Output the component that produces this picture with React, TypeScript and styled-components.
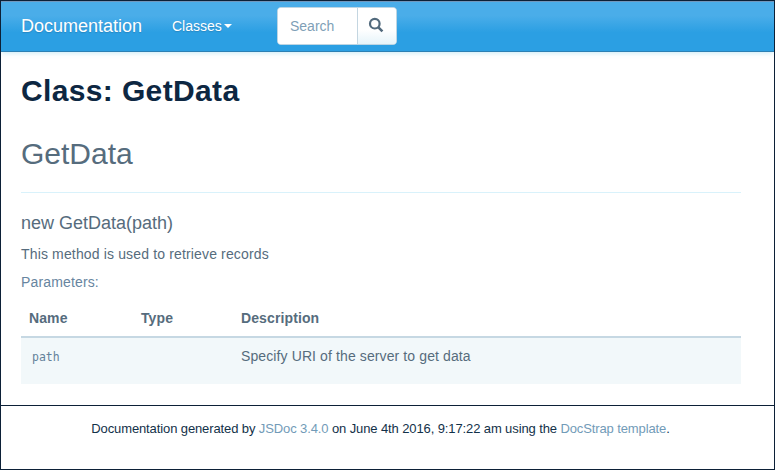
import React from "react";
import styled, { createGlobalStyle } from "styled-components";

const GlobalStyle = createGlobalStyle`
  * { box-sizing: border-box; }
  html, body { margin: 0; padding: 0; }
  body {
    font-family: "Liberation Sans", Arial, sans-serif;
    font-size: 14px;
    line-height: 20px;
    color: #566c7d;
    background: #fff;
  }
`;

const Page = styled.div`
  display: flex;
  flex-direction: column;
  width: 775px;
  height: 470px;
  border: 1px solid #0c2037;
  overflow: hidden;
`;

const Navbar = styled.nav`
  display: flex;
  flex: none;
  align-items: center;
  height: 51px;
  padding: 0 20px 2px;
  background: linear-gradient(#4aade9 0, #4aade9 28%, #2b9fe3 62%, #2b9fe3 100%);
  border-top: 1px solid #7197bd;
  border-bottom: 1px solid #2c80b4;
  box-shadow: 0 1px 5px rgba(80, 190, 225, 0.3);
  color: #fff;
  text-shadow: 0 1px 1px rgba(30, 80, 120, 0.3);
`;

const Brand = styled.a`
  width: 151px;
  font-size: 18px;
`;

const NavItem = styled.a`
  display: flex;
  align-items: center;
  width: 105px;
`;

const Caret = styled.span`
  margin-left: 2px;
  border-top: 4px solid #fff;
  border-left: 4px solid transparent;
  border-right: 4px solid transparent;
`;

const SearchGroup = styled.div`
  display: flex;
  width: 120px;
  height: 38px;
  border: 1px solid #bdd5e3;
  border-radius: 4px;
  overflow: hidden;
  background: #fff;
`;

const SearchInput = styled.input`
  width: 79px;
  padding: 0 0 0 12px;
  border: 0;
  outline: 0;
  font: inherit;
  color: #566c7d;
  background: #fff;
  &::placeholder { color: #7f9fb7; opacity: 1; }
`;

const SearchButton = styled.button`
  display: flex;
  flex: 1;
  align-items: center;
  justify-content: center;
  padding: 0 2px 2px 0;
  border: 0;
  border-left: 1px solid #c4d6e1;
  background: linear-gradient(#fff 60%, #e6f4fa);
`;

const Content = styled.main`
  display: flex;
  flex: none;
  flex-direction: column;
  height: 353px;
  padding: 0 33px 0 20px;
`;

const PageTitle = styled.h1`
  margin: 20px 0 0;
  font-size: 30px;
  line-height: 38px;
  letter-spacing: 0.36px;
  color: #0d2742;
`;

const SectionTitle = styled.h2`
  height: 58px;
  margin: 25px 0 0;
  border-bottom: 1px solid #d9f2fb;
  font-size: 30px;
  font-weight: 400;
  line-height: 38px;
`;

const MethodTitle = styled.h4`
  margin: 20px 0 0;
  font-size: 18px;
  font-weight: 400;
  line-height: 20px;
`;

const Text = styled.p`
  margin: 11px 0 0;
  letter-spacing: 0.15px;
`;

const ParamsHeading = styled.h5`
  margin: 8px 0 0;
  font-size: 14px;
  font-weight: 400;
  letter-spacing: 0.15px;
  color: #6785a0;
`;

const Table = styled.table`
  width: 720px;
  margin-top: 7px;
  border-spacing: 0;
  table-layout: fixed;
  letter-spacing: 0.11px;
`;

const HeadCell = styled.th<{ $width?: number }>`
  width: ${(p) => (p.$width ? `${p.$width}px` : "auto")};
  height: 39px;
  padding: 1px 8px 0;
  border-bottom: 2px solid #c6d8e3;
  text-align: left;
`;

const Cell = styled.td`
  height: 46px;
  padding: 8px 8px 0;
  vertical-align: top;
  background: #f2f8fa;
`;

const Code = styled.code`
  padding: 0 3px;
  font-family: "DejaVu Sans Mono", monospace;
  font-size: 11.5px;
  letter-spacing: 0;
  color: #64829a;
`;

const Footer = styled.footer`
  flex: 1;
  padding: 13px 14px 0 0;
  border-top: 1px solid #0c2037;
  font-size: 13px;
  letter-spacing: -0.11px;
  text-align: center;
  color: #123149;
`;

const PlainLink = styled.a`
  color: #729bb8;
`;

const SearchIcon = () => (
  <svg width="16" height="16" viewBox="0 0 16 16" fill="none" stroke="#526a7d">
    <circle cx="6.8" cy="6.7" r="4.8" strokeWidth="2.2" />
    <path d="M10.4 10.4l4 4" strokeWidth="2.6" />
  </svg>
);

export default function App() {
  return (
    <>
      <GlobalStyle />
      <Page>
        <Navbar>
          <Brand>Documentation</Brand>
          <NavItem>
            Classes
            <Caret />
          </NavItem>
          <SearchGroup>
            <SearchInput placeholder="Search" />
            <SearchButton aria-label="Search">
              <SearchIcon />
            </SearchButton>
          </SearchGroup>
        </Navbar>
        <Content>
          <PageTitle>Class: GetData</PageTitle>
          <SectionTitle>GetData</SectionTitle>
          <MethodTitle>new GetData(path)</MethodTitle>
          <Text>This method is used to retrieve records</Text>
          <ParamsHeading>Parameters:</ParamsHeading>
          <Table>
            <thead>
              <tr>
                <HeadCell $width={112}>Name</HeadCell>
                <HeadCell $width={100}>Type</HeadCell>
                <HeadCell>Description</HeadCell>
              </tr>
            </thead>
            <tbody>
              <tr>
                <Cell>
                  <Code>path</Code>
                </Cell>
                <Cell />
                <Cell>Specify URI of the server to get data</Cell>
              </tr>
            </tbody>
          </Table>
        </Content>
        <Footer>
          Documentation generated by <PlainLink>JSDoc 3.4.0</PlainLink> on June 4th 2016, 9:17:22 am using the{" "}
          <PlainLink>DocStrap template</PlainLink>.
        </Footer>
      </Page>
    </>
  );
}
